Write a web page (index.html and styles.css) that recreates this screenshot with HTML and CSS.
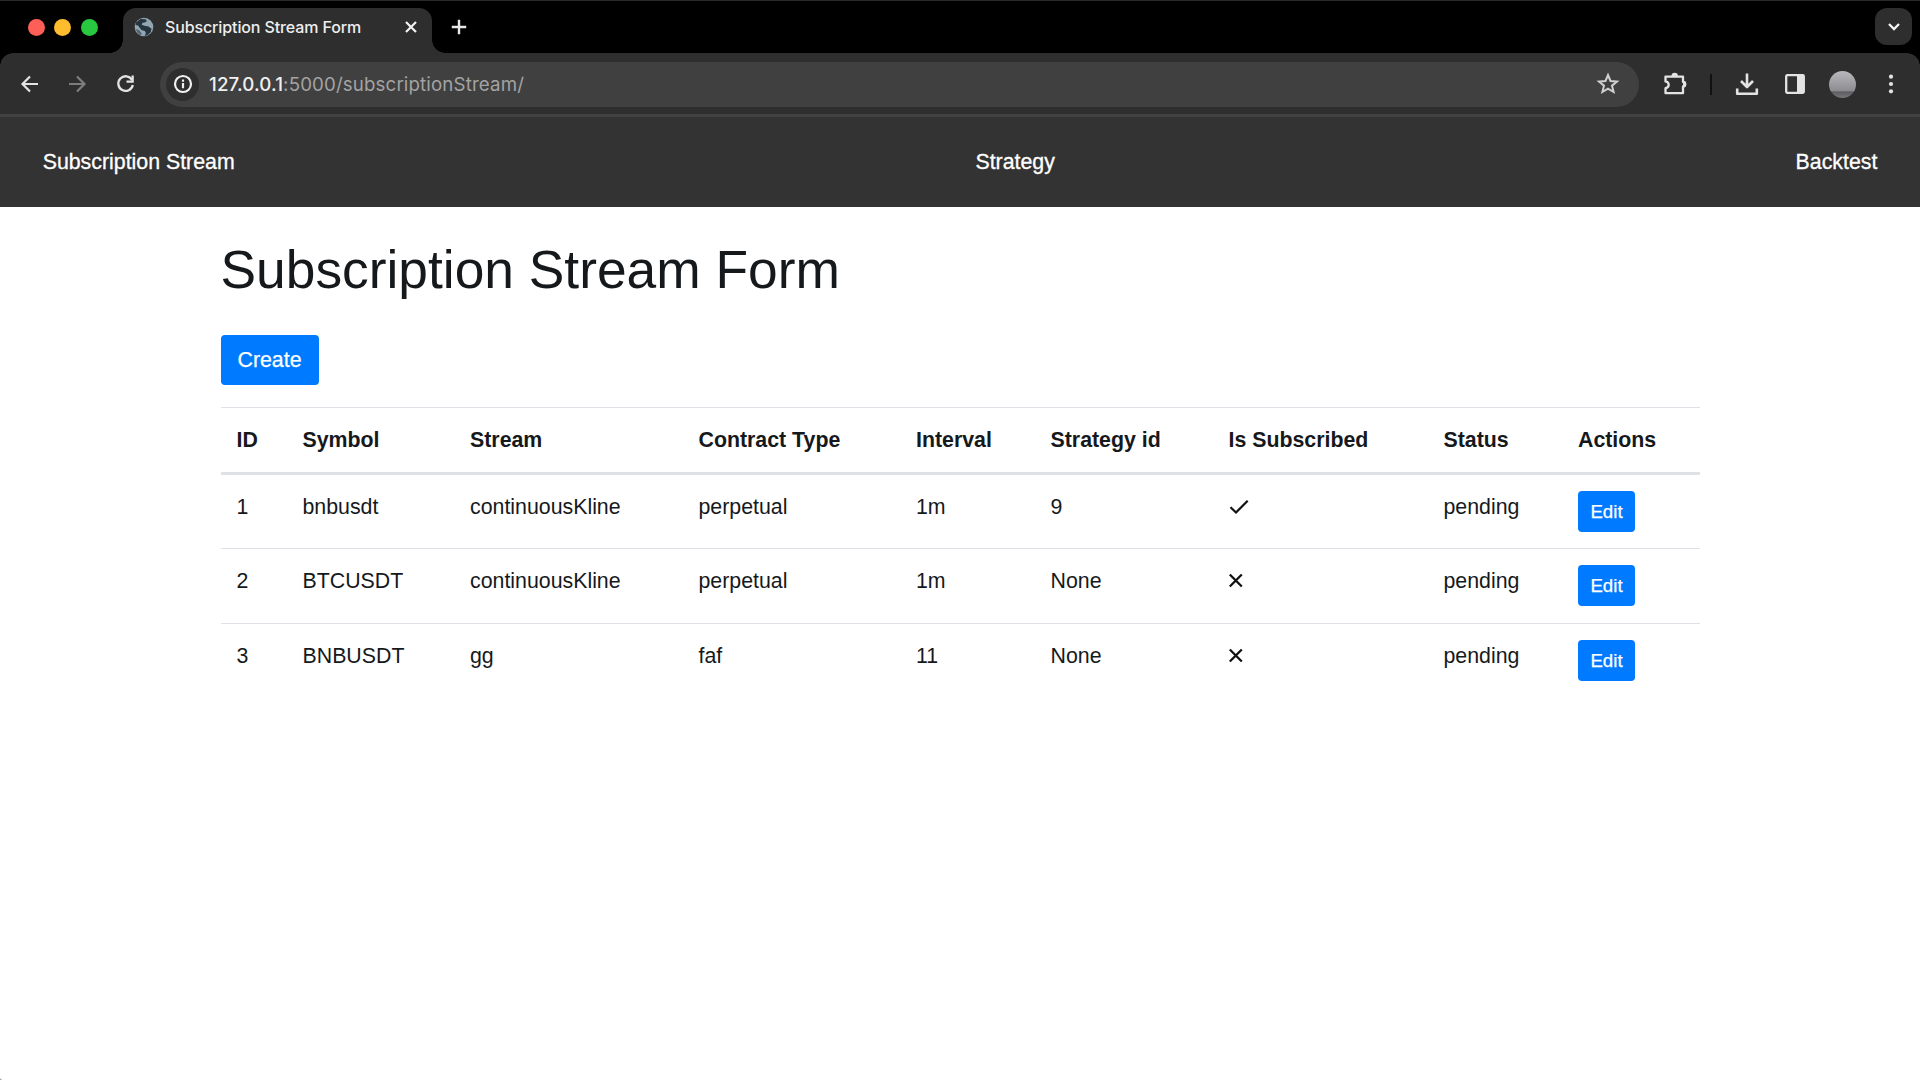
FILE: index.html
```html
<!DOCTYPE html>
<html lang="en">
<head>
<meta charset="utf-8">
<title>Subscription Stream Form</title>
<link rel="stylesheet" href="styles.css">
</head>
<body>
<div class="window">
  <header class="tabstrip">
    <div class="lights"><span class="light red"></span><span class="light yellow"></span><span class="light green"></span></div>
    <div class="tab">
      <svg class="favicon" width="20" height="20" viewBox="0 0 20 20"><circle cx="10" cy="10" r="9.3" fill="#91a5b2"/><path d="M2 5.5 6.5 2l5 .2 1.5 2-2.5 1.3-2 .2-.8 2 2.8 1 4 .8 3 2.3-.8 3.5-3.5 3-2.5.8 1.2-3-1-2-3.5-1.2L4 8.5 1.5 8z" fill="#25343e"/><path d="m2 12 3 1 3 4-1.500 1A9 9 0 0 1 2 12z" fill="#52636e"/></svg>
      <span class="tab-title">Subscription Stream Form</span>
      <svg class="tab-close" width="14" height="14" viewBox="0 0 14 14"><path d="m2 2 10 10M12 2 2 12" stroke="#f2f2f2" stroke-width="2.200"/></svg>
    </div>
    <svg class="new-tab" width="16" height="16" viewBox="0 0 16 16"><path d="M8 .8v14.400M.8 8h14.400" stroke="#e8e8e8" stroke-width="2.400"/></svg>
    <div class="tab-search"><svg width="14" height="10" viewBox="0 0 14 10"><path d="m2 2 5 5 5-5" fill="none" stroke="#f4f4f4" stroke-width="2.300"/></svg></div>
  </header>
  <div class="toolbar">
    <div class="nav-buttons">
      <svg width="20" height="20" viewBox="0 0 20 20"><path d="M18 10H3M10 2.500 2.500 10l7.500 7.500" fill="none" stroke="#e3e3e3" stroke-width="2.200"/></svg>
      <svg width="20" height="20" viewBox="0 0 20 20"><path d="M1 10h15M9 2.500l7.500 7.500-7.500 7.500" fill="none" stroke="#7d7d7d" stroke-width="2.200"/></svg>
      <svg width="20" height="20" viewBox="0 0 20 20"><path d="M16 6A7.300 7.300 0 1 0 16.800 11" fill="none" stroke="#e3e3e3" stroke-width="2.300"/><path d="M17.800 1.500v7.300h-7.300V6.600h5V1.500z" fill="#e3e3e3"/></svg>
    </div>
    <div class="address">
      <span class="site-info"><svg width="20" height="20" viewBox="0 0 20 20"><circle cx="10" cy="10" r="8" fill="none" stroke="#f0f0f0" stroke-width="2.200"/><path d="M10 9v5.200M10 5.500v2.200" stroke="#f0f0f0" stroke-width="2.200"/></svg></span>
      <span class="url"><span class="host">127.0.0.1</span><span class="path">:5000/subscriptionStream/</span></span>
      <svg class="star" width="24" height="24" viewBox="0 0 24 24"><path d="m12 3 2.500 6 6.500.5-5 4.200 1.600 6.300L12 16.600 6.400 20 8 13.700 3 9.500 9.500 9z" fill="none" stroke="#d0d0d0" stroke-width="2"/></svg>
    </div>
    <div class="tools">
      <svg class="puzzle" width="24" height="24" viewBox="0 0 24 24"><path d="M2.500 4.600H20V10q2.200 0 2.200 2.300T20 14.500v6.700H2.500v-5q3.200-.7 3.200-3.400T2.500 9.400z" fill="none" stroke="#e3e3e3" stroke-width="2.300" stroke-linejoin="round"/><path d="M8.500 4a3.200 3.200 0 0 1 6.400 0zM20 9a3.200 3.200 0 0 1 0 6.400z" fill="#e3e3e3"/></svg>
      <span class="divider"></span>
      <svg class="download" width="24" height="24" viewBox="0 0 24 24"><path d="M12 1.500v13M6 9l6 6 6-6M2.200 16.500v5.300h19.600v-5.300" fill="none" stroke="#e3e3e3" stroke-width="2.600" stroke-linejoin="round"/></svg>
      <svg class="panel" width="20" height="20" viewBox="0 0 20 20"><rect x="1.200" y="1.200" width="17.600" height="17.600" rx="1" fill="none" stroke="#e3e3e3" stroke-width="2.300"/><path d="M12 1h7v18h-7z" fill="#e3e3e3"/></svg>
      <span class="avatar"></span>
      <svg class="menu" width="6" height="20" viewBox="0 0 6 20"><g fill="#e3e3e3"><circle cx="3" cy="2.700" r="2.100"/><circle cx="3" cy="10" r="2.100"/><circle cx="3" cy="17.300" r="2.100"/></g></svg>
    </div>
  </div>
  <nav class="navbar"><a>Subscription Stream</a><a>Strategy</a><a>Backtest</a></nav>
  <main class="container">
    <h1>Subscription Stream Form</h1>
    <button class="btn">Create</button>
    <table class="table">
      <colgroup><col class="c-id"><col class="c-symbol"><col class="c-stream"><col class="c-contract"><col class="c-interval"><col class="c-strategy"><col class="c-subscribed"><col class="c-status"><col class="c-actions"></colgroup>
      <thead><tr><th>ID</th><th>Symbol</th><th>Stream</th><th>Contract Type</th><th>Interval</th><th>Strategy id</th><th>Is Subscribed</th><th>Status</th><th>Actions</th></tr></thead>
      <tbody>
        <tr><td>1</td><td>bnbusdt</td><td>continuousKline</td><td>perpetual</td><td>1m</td><td>9</td><td><svg class="mark" width="22" height="18" viewBox="0 0 22 18"><path d="m1.500 9.200 5.500 5.300L18.700 2.700" fill="none" stroke="#111" stroke-width="2.200"/></svg></td><td>pending</td><td><button class="btn btn-sm">Edit</button></td></tr>
        <tr><td>2</td><td>BTCUSDT</td><td>continuousKline</td><td>perpetual</td><td>1m</td><td>None</td><td><svg class="mark" width="22" height="18" viewBox="0 0 22 18"><path d="m.8 2.500 12 12M12.800 2.500l-12 12" fill="none" stroke="#111" stroke-width="2.300"/></svg></td><td>pending</td><td><button class="btn btn-sm">Edit</button></td></tr>
        <tr><td>3</td><td>BNBUSDT</td><td>gg</td><td>faf</td><td>11</td><td>None</td><td><svg class="mark" width="22" height="18" viewBox="0 0 22 18"><path d="m.8 2.500 12 12M12.800 2.500l-12 12" fill="none" stroke="#111" stroke-width="2.300"/></svg></td><td>pending</td><td><button class="btn btn-sm">Edit</button></td></tr>
      </tbody>
    </table>
  </main>
</div>
</body>
</html>
```

FILE: styles.css
```css
* { box-sizing: border-box; }
body { margin: 0; background: #999; font-family: "Liberation Sans", Arial, sans-serif; }
svg { display: block; flex: none; }
.window { height: 1080px; background: #fff; overflow: hidden; border-bottom-left-radius: 3px; }

/* Browser tabs */
.tabstrip { display: flex; height: 53px; padding: 8px 8px 0 27.500px; background: #000; box-shadow: inset 0 1px #292929; }
.lights { display: flex; gap: 9.500px; padding-top: 10.500px; width: 95.500px; }
.light { width: 17px; height: 17px; border-radius: 50%; }
.red { background: #ff5f57; }
.yellow { background: #febc2e; }
.green { background: #28c840; }
.tab { position: relative; display: flex; align-items: center; width: 309px; height: 45px; padding: 0 14px 8px 11px; background: #2e2e2e; border-radius: 13px 13px 0 0; }
.tab::before, .tab::after { content: ""; position: absolute; bottom: 0; width: 13px; height: 13px; }
.tab::before { left: -13px; background: radial-gradient(circle at 0 0, transparent 12.500px, #2e2e2e 13px); }
.tab::after { right: -13px; background: radial-gradient(circle at 100% 0, transparent 12.500px, #2e2e2e 13px); }
.tab-title { margin-left: 11px; color: #eee; font: 500 16px/20px Inter, sans-serif; letter-spacing: -.12px; white-space: nowrap; }
.tab-close { margin-left: auto; }
.new-tab { margin: 10.500px 0 0 18.500px; }
.tab-search { display: flex; align-items: center; justify-content: center; width: 37px; height: 37px; margin-left: auto; border-radius: 12px; background: #2e2e2e; }

/* Browser toolbar */
.toolbar { display: flex; align-items: center; height: 64px; padding: 1px 26.500px 0 20px; border-bottom: 3px solid #424242; background: radial-gradient(circle at 13px 13px, #2e2e2e 12.500px, #000 13px) 0 0 / 13px 13px no-repeat, radial-gradient(circle at 0 13px, #2e2e2e 12.500px, #000 13px) 100% 0 / 13px 13px no-repeat, #2e2e2e; }
.nav-buttons { display: flex; gap: 28px; }
.address { display: flex; align-items: center; width: 1479px; height: 45px; margin-left: 24px; padding: 0 19px 0 6px; border-radius: 23px; background: #404040; }
.site-info { display: flex; align-items: center; justify-content: center; width: 33px; height: 33px; border-radius: 50%; background: #2e2e2e; }
.url { margin: 1px 0 0 10px; font: 400 18.700px/24px Inter, sans-serif; letter-spacing: .14px; white-space: nowrap; }
.host { color: #f0f0f0; font-weight: 500; }
.path { color: #a3a3a3; }
.star { margin-left: auto; }
.tools { display: flex; flex: 1; align-items: center; margin-left: 24px; }
.divider { width: 2px; height: 21px; margin-left: 22.500px; background: #111; }
.download { margin-left: 23px; }
.panel { margin-left: 26.500px; }
.avatar { width: 27px; height: 27px; margin-left: 24px; border-radius: 50%; background: linear-gradient(#b9b9bd, #8d8d92 72%, #5d5d62 78%, #77777c); }
.menu { margin-left: auto; }

/* Page */
.navbar { display: flex; justify-content: space-between; height: 90px; padding: 28.500px 42.670px 0; background: #333; }
.navbar a { color: #fff; font-size: 21.330px; line-height: 32px; -webkit-text-stroke: .3px #fff; }
.container { width: 1479px; margin: 0 auto; padding-top: 31px; color: #16191c; }
h1 { margin: 0; font-size: 53.330px; font-weight: 400; line-height: 64px; }
.btn { display: block; width: 98px; height: 50px; margin: 33px 0 22px; padding: 0; border: 0; border-radius: 4px; background: #007bff; color: #fff; font: 21.330px/50px "Liberation Sans", Arial, sans-serif; -webkit-text-stroke: .25px #fff; }
.table { width: 1479px; table-layout: fixed; border-spacing: 0; font-size: 21.330px; line-height: 32px; }
.table th, .table td { padding: 16px 0 0 16px; text-align: left; vertical-align: top; }
.table th { height: 68px; border-top: 1px solid #dee2e6; border-bottom: 3px solid #dee2e6; }
.table td { height: 75px; }
.table tbody tr:first-child td { height: 73px; }
.table tr + tr td { border-top: 1px solid #dee2e6; }
.c-id { width: 66px; }
.c-symbol { width: 167.500px; }
.c-stream { width: 228.500px; }
.c-contract { width: 217.500px; }
.c-interval { width: 134.500px; }
.c-strategy { width: 178px; }
.c-subscribed { width: 215px; }
.c-status { width: 134.500px; }
.mark { margin-top: 7px; }
.btn-sm { width: 57px; height: 41px; margin: 0; font-size: 18.670px; line-height: 41px; }
```
